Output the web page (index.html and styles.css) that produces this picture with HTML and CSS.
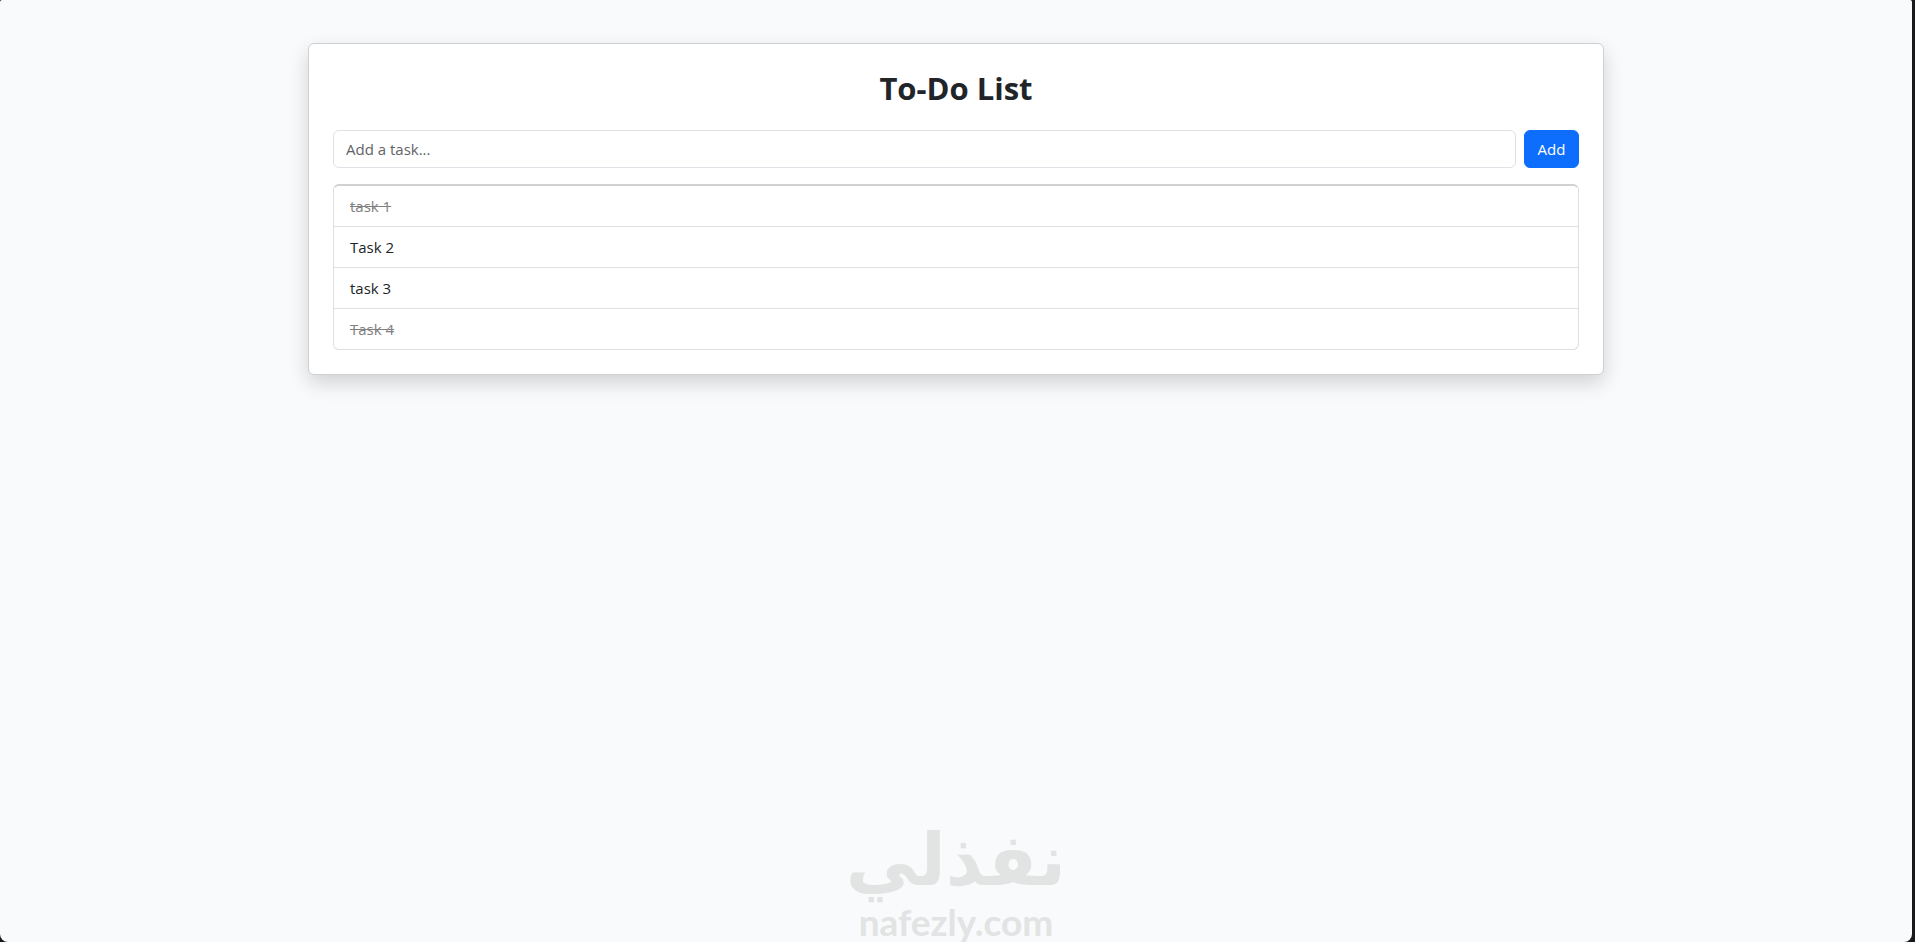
FILE: index.html
```html
<!DOCTYPE html>
<html lang="en">
<head>
  <meta charset="UTF-8">
  <meta name="viewport" content="width=device-width, initial-scale=1.0">
  <title>To-Do List</title>
  <link rel="stylesheet" href="styles.css">
</head>
<body>
  <div class="page">
    <main class="container">
      <div class="card">
        <h1>To-Do List</h1>
        <form class="task-form" id="taskForm">
          <input type="text" class="task-input" id="taskInput" placeholder="Add a task..." aria-label="Add a task">
          <button type="submit" class="btn-add">Add</button>
        </form>
        <ul class="task-list" id="taskList">
          <li class="task completed">task 1</li>
          <li class="task">Task 2</li>
          <li class="task">task 3</li>
          <li class="task completed">Task 4</li>
        </ul>
      </div>
    </main>

    <footer class="brand">
      <span class="brand-name" lang="ar" dir="rtl">نفذلي</span>
      <span class="brand-site">nafezly.com</span>
    </footer>
  </div>

  <script>
    var list = document.getElementById('taskList');

    document.getElementById('taskForm').addEventListener('submit', function (e) {
      e.preventDefault();
      var input = document.getElementById('taskInput');
      var text = input.value.trim();
      if (text === '') return;

      var li = document.createElement('li');
      li.className = 'task';
      li.textContent = text;
      list.appendChild(li);
      input.value = '';
    });

    // click a task to mark it as done
    list.addEventListener('click', function (e) {
      if (e.target.classList.contains('task')) {
        e.target.classList.toggle('completed');
      }
    });
  </script>
</body>
</html>
```
FILE: styles.css
```css
* {
  box-sizing: border-box;
}

body {
  margin: 0;
  background-color: #17191b;
  color: #212529;
  font-family: "Segoe UI", "Open Sans", "Noto Sans", sans-serif;
  font-size: 15px;
  line-height: 24px;
}

.page {
  display: flex;
  flex-direction: column;
  min-height: 100vh;
  margin-right: 3px;
  padding-top: 43px;
  background-color: #f9fafc;
  border-radius: 2px 2px 8px 8px;
}

.container {
  width: 100%;
  max-width: 1320px;
  margin: 0 auto;
  padding: 0 12px;
}

.card {
  padding: 24px;
  background-color: #fff;
  border: 1px solid #cfd0d1;
  border-radius: 6px;
  box-shadow: 0 8px 20px rgba(0, 0, 0, 0.16);
}

h1 {
  margin: 0 0 22px;
  font-size: 31px;
  line-height: 40px;
  font-weight: 700;
  text-align: center;
}

.task-form {
  display: flex;
  gap: 8px;
  margin-bottom: 16px;
}

.task-input {
  flex: 1;
  min-width: 0;
  height: 38px;
  padding: 6px 12px;
  font: inherit;
  color: #212529;
  background-color: #fff;
  border: 1px solid #dee2e6;
  border-radius: 6px;
}

.task-input::placeholder {
  color: #5f6366;
  opacity: 1;
}

.btn-add {
  min-width: 55px;
  height: 38px;
  padding: 6px 12px;
  font: inherit;
  color: #fff;
  background-color: #0d6efd;
  border: 1px solid #0d6efd;
  border-radius: 6px;
  cursor: pointer;
}

.btn-add:hover {
  background-color: #0b5ed7;
}

.task-list {
  margin: 0;
  padding: 0;
  list-style: none;
  border: 1px solid #dddfe1;
  border-top: 2px solid #d0d1d3;
  border-radius: 6px;
}

.task {
  padding: 8px 16px;
  cursor: pointer;
}

.task + .task {
  border-top: 1px solid #dddfe1;
}

.task.completed {
  color: #808080;
  text-decoration: line-through;
}

.brand {
  display: flex;
  flex-direction: column;
  align-items: center;
  margin-top: auto;
  color: #e2e3e3;
  font-weight: 700;
}

.brand-name {
  font-family: "DejaVu Sans", sans-serif;
  font-size: 72px;
  line-height: 84px;
}

.brand-site {
  font-family: Lato, sans-serif;
  font-size: 37px;
  line-height: 40px;
}
```
